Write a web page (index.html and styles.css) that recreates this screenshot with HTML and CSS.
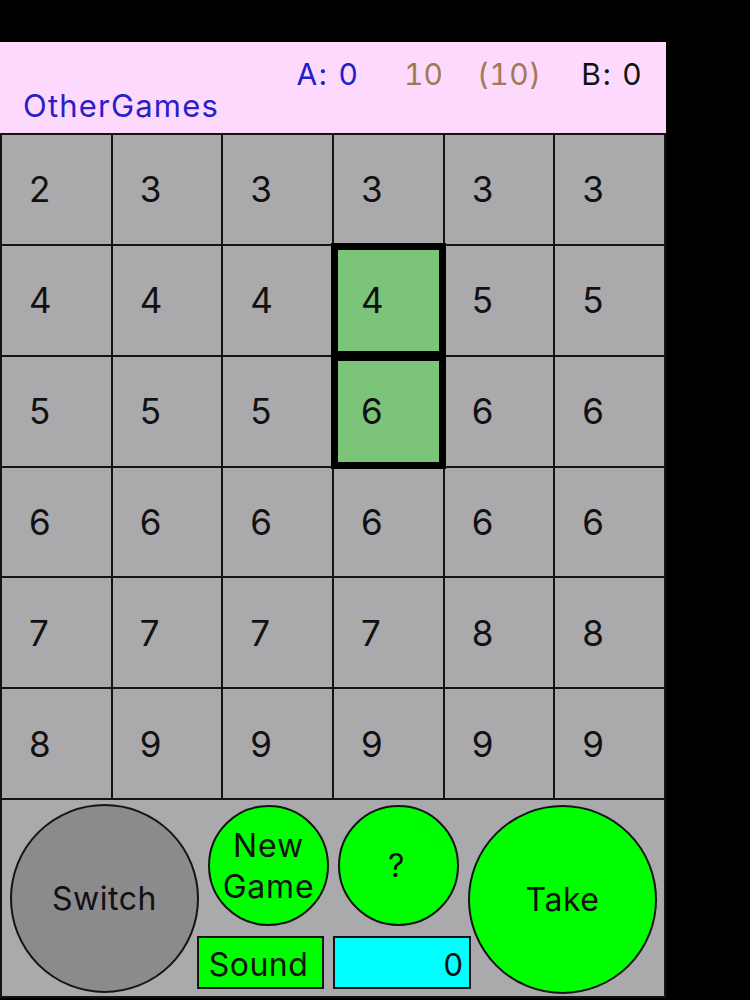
FILE: index.html
```html
<!DOCTYPE html>
<html>
<head>
<meta charset="utf-8">
<link rel="stylesheet" href="styles.css">
</head>
<body>
<div class="app">
  <header class="header">
    <div class="scores">
      <span class="score-a">A: 0</span>
      <span class="score-mid">10</span>
      <span class="score-paren">(10)</span>
      <span class="score-b">B: 0</span>
    </div>
    <div class="other">OtherGames</div>
  </header>
  <div class="board">
    <div class="cell">2</div><div class="cell">3</div><div class="cell">3</div><div class="cell">3</div><div class="cell">3</div><div class="cell">3</div>
    <div class="cell">4</div><div class="cell">4</div><div class="cell">4</div><div class="cell sel">4</div><div class="cell">5</div><div class="cell">5</div>
    <div class="cell">5</div><div class="cell">5</div><div class="cell">5</div><div class="cell sel">6</div><div class="cell">6</div><div class="cell">6</div>
    <div class="cell">6</div><div class="cell">6</div><div class="cell">6</div><div class="cell">6</div><div class="cell">6</div><div class="cell">6</div>
    <div class="cell">7</div><div class="cell">7</div><div class="cell">7</div><div class="cell">7</div><div class="cell">8</div><div class="cell">8</div>
    <div class="cell">8</div><div class="cell">9</div><div class="cell">9</div><div class="cell">9</div><div class="cell">9</div><div class="cell">9</div>
  </div>
  <div class="controls">
    <div class="circle big switch">Switch</div>
    <div class="middle">
      <div class="mid-top">
        <div class="circle small green newgame">New<br>Game</div>
        <div class="circle small green help">?</div>
      </div>
      <div class="mid-bottom">
        <div class="rect sound">Sound</div>
        <div class="rect counter">0</div>
      </div>
    </div>
    <div class="circle big green take">Take</div>
  </div>
</div>
</body>
</html>
```
FILE: styles.css
```css
html, body {
  margin: 0;
  padding: 0;
  background: #000;
}
body {
  width: 750px;
  height: 1000px;
  overflow: hidden;
  font-family: Inter, "Liberation Sans", sans-serif;
}
.app {
  margin-top: 42px;
  width: 666px;
}
.header {
  background: #fdd9fd;
  height: 91px;
  box-sizing: border-box;
  padding-top: 16px;
}
.scores {
  display: flex;
  justify-content: flex-end;
  padding-right: 23px;
  font-size: 30px;
  line-height: 32px;
  height: 32px;
  letter-spacing: 1.5px;
}
.score-a { color: #2020c8; margin-right: 45px; }
.score-mid {
  color: #a07a54;
  margin-right: 34px;
  letter-spacing: 0;
  font-variant-numeric: tabular-nums;
}
.score-paren {
  color: #a07a54;
  margin-right: 40px;
  letter-spacing: 0.5px;
  font-variant-numeric: tabular-nums;
}
.score-b { color: #111; }
.other {
  color: #2a20c8;
  font-size: 31px;
  line-height: 32px;
  padding-left: 23px;
  letter-spacing: 1.2px;
}
.board {
  background: #141414;
  display: grid;
  grid-template-columns: repeat(6, 1fr);
  grid-template-rows: repeat(6, 1fr);
  gap: 2px;
  padding: 2px;
  height: 667px;
  box-sizing: border-box;
}
.cell {
  background: #aaa9ab;
  color: #111;
  font-size: 35px;
  display: flex;
  align-items: center;
  padding-left: 27px;
}
.cell.sel {
  background: #7cc47a;
  box-shadow: inset 0 0 0 4px #000;
  outline: 3px solid #000;
  position: relative;
  z-index: 1;
}
.controls {
  background: #aaa9ab;
  height: 198px;
  box-sizing: border-box;
  border: 2px solid #141414;
  border-top: 0;
  display: flex;
  align-items: flex-start;
  padding: 4px 0 0 8px;
}
.circle {
  border-radius: 50%;
  border: 2px solid #141414;
  box-sizing: border-box;
  display: flex;
  align-items: center;
  justify-content: center;
  text-align: center;
  color: #111;
  font-size: 32px;
  letter-spacing: 0.5px;
}
.big {
  width: 189px;
  height: 189px;
}
.switch {
  background: #8b8a8c;
}
.green {
  background: #00ff00;
}
.take {
  margin-left: -3px;
  margin-top: 1px;
}
.middle {
  width: 274px;
  margin-left: -2px;
  display: flex;
  flex-direction: column;
}
.mid-top {
  display: flex;
  gap: 9px;
  padding-left: 11px;
  margin-top: 1px;
}
.small {
  width: 121px;
  height: 121px;
  line-height: 41px;
  font-size: 32px;
  letter-spacing: 0.8px;
}
.help {
  font-size: 32px;
  padding-right: 4px;
}
.mid-bottom {
  display: flex;
  gap: 9px;
  margin-top: 10px;
}
.rect {
  height: 53px;
  border: 2px solid #141414;
  box-sizing: border-box;
  display: flex;
  align-items: center;
  font-size: 32px;
  color: #111;
  padding-top: 4px;
}
.sound {
  width: 127px;
  background: #00ff00;
  justify-content: center;
  letter-spacing: 0.5px;
  padding-right: 4px;
}
.counter {
  width: 138px;
  background: #00ffff;
  justify-content: flex-end;
  padding-right: 6px;
  font-size: 31px;
}
```
